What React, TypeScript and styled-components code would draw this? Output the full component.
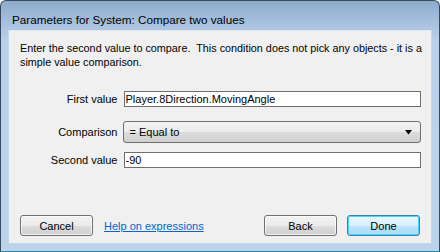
import styled, { createGlobalStyle } from 'styled-components'

const GlobalStyle = createGlobalStyle`
  html, body {
    margin: 0;
    padding: 0;
    background: #ffffff;
  }
  * {
    box-sizing: border-box;
  }
`

const uiFont = `"Liberation Sans", Arial, sans-serif`

export default function App() {
    return (
        <>
            <GlobalStyle/>
            <Window>
                <TitleBar>Parameters for System: Compare two values</TitleBar>
                <Frame>
                    <Panel>
                        <Description>
                            <span>Enter the second value to compare.&nbsp; This condition does not pick any objects - it is a</span>
                            <span>simple value comparison.</span>
                        </Description>

                        <Form>
                            <Row $top={22}>
                                <Label>First value</Label>
                                <TextBox defaultValue="Player.8Direction.MovingAngle"/>
                            </Row>
                            <Row $top={14}>
                                <Label>Comparison</Label>
                                <Combo>
                                    <span>= Equal to</span>
                                    <svg width="8" height="5" viewBox="0 0 8 5">
                                        <path d="M0 0 H7 L3.5 4.5 Z" fill="#000"/>
                                    </svg>
                                </Combo>
                            </Row>
                            <Row $top={9}>
                                <Label>Second value</Label>
                                <TextBox defaultValue="-90"/>
                            </Row>
                        </Form>

                        <Footer>
                            <Button>Cancel</Button>
                            <HelpLink href="#">Help on expressions</HelpLink>
                            <Spacer/>
                            <Button>Back</Button>
                            <Button $primary>Done</Button>
                        </Footer>
                    </Panel>
                </Frame>
            </Window>
        </>
    )
}

const Window = styled.div`
    width: 440px;
    height: 252px;
    display: flex;
    flex-direction: column;
    border: 1px solid #36495e;
    border-bottom-color: #2a86a6;
    border-radius: 6px 6px 0 0;
    background: linear-gradient(to bottom, #8eabcc 0px, #a9c3e0 24px, #b9d1ea 40px, #bcd3ec 100%);
    font-family: ${uiFont};
    overflow: hidden;
`

const TitleBar = styled.div`
    height: 29px;
    padding: 7px 0 0 11px;
    display: flex;
    align-items: center;
    font-size: 11.7px;
    color: #000;
    white-space: nowrap;
`

const Frame = styled.div`
    flex: 1;
    display: flex;
    min-width: 0;
    padding: 0 7px 7px 7px;
`

const Panel = styled.div`
    flex: 1;
    min-width: 0;
    display: flex;
    flex-direction: column;
    background: #f0f0f0;
    border: 1px solid #c7d6e8;
    border-top-color: #dde6f1;
    padding: 10px 10px 7px 11px;
    overflow: hidden;
`

const Description = styled.div`
    display: flex;
    flex-direction: column;
    font-size: 10.8px;
    line-height: 14px;
    color: #000;
    white-space: nowrap;
`

const Form = styled.div`
    display: flex;
    flex-direction: column;
`

const Row = styled.div<{ $top: number }>`
    display: flex;
    align-items: center;
    gap: 6px;
    margin-top: ${p => p.$top}px;
`

const Label = styled.div`
    width: 98px;
    text-align: right;
    font-size: 11px;
    color: #000;
    white-space: nowrap;
`

const TextBox = styled.input`
    width: 299px;
    height: 16px;
    border: 1px solid #6e6e6e;
    background: #fff;
    padding: 0 1px;
    font-family: ${uiFont};
    font-size: 11px;
    color: #000;
    outline: none;
`

const Combo = styled.div`
    width: 299px;
    height: 22px;
    display: flex;
    align-items: center;
    justify-content: space-between;
    padding: 0 7px 0 5px;
    border: 1px solid #707070;
    border-radius: 3px;
    background: linear-gradient(to bottom, #f2f2f2 0%, #ebebeb 50%, #dddddd 51%, #cfcfcf 100%);
    font-size: 11px;
    color: #000;
`

const Footer = styled.div`
    margin-top: auto;
    display: flex;
    align-items: center;
    gap: 10px;
    padding-right: 1px;
`

const Spacer = styled.div`
    flex: 1;
`

const Button = styled.button<{ $primary?: boolean }>`
    width: 73px;
    height: 21px;
    padding: 0;
    border-radius: 3px;
    font-family: ${uiFont};
    font-size: 11px;
    color: #000;
    border: 1px solid ${p => p.$primary ? '#3c7fb1' : '#707070'};
    background: ${p => p.$primary
        ? 'linear-gradient(to bottom, #eaf6fd 0%, #d9f0fc 50%, #bee6fd 51%, #a7d9f5 100%)'
        : 'linear-gradient(to bottom, #f2f2f2 0%, #ebebeb 50%, #dddddd 51%, #cfcfcf 100%)'};
    box-shadow: inset 0 0 0 1px ${p => p.$primary ? '#48d8fb' : 'rgba(255,255,255,0.7)'};
`

const HelpLink = styled.a`
    margin-left: 1px;
    font-size: 11px;
    color: #0066cc;
    text-decoration: underline;
    white-space: nowrap;
`
